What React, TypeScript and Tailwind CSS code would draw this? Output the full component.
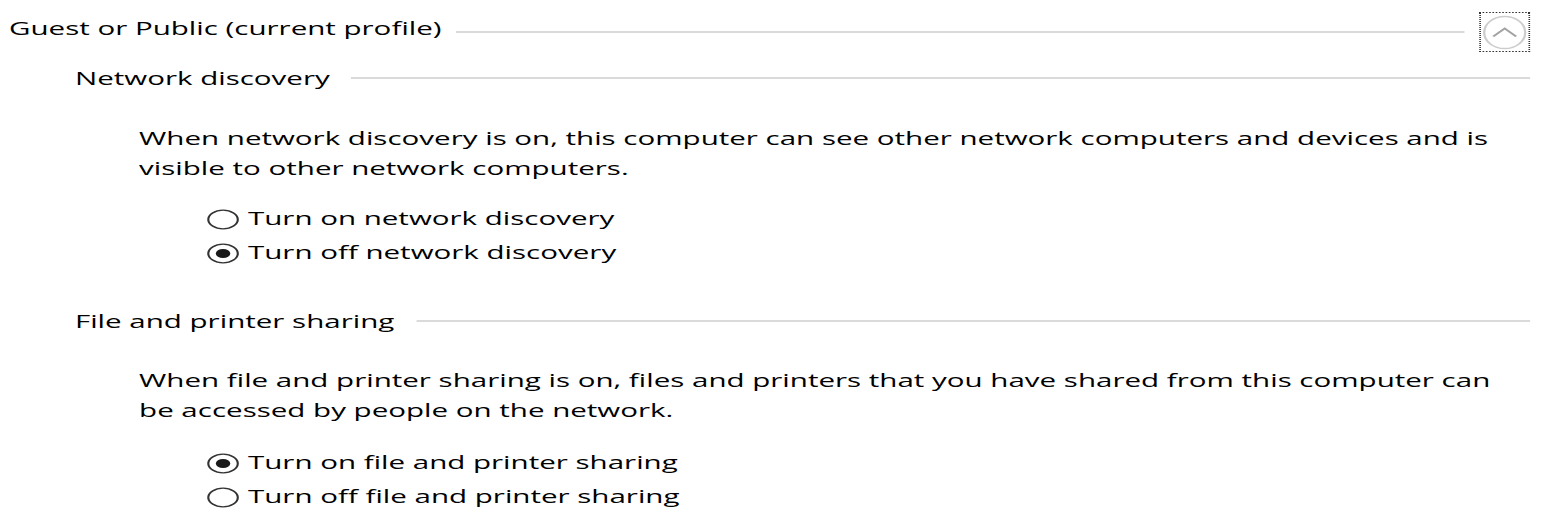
import React from "react";

function Radio({ checked }: { checked: boolean }) {
  return (
    <svg width="20" height="21" viewBox="0 0 20 21" className="mt-[5.5px] shrink-0">
      <ellipse cx="10" cy="10.5" rx="9" ry="9.3" fill="white" stroke="#333" strokeWidth="1.3" />
      {checked && <ellipse cx="10" cy="10.5" rx="4.4" ry="4.6" fill="#1a1a1a" />}
    </svg>
  );
}

function RadioRow({ checked, label }: { checked: boolean; label: string }) {
  return (
    <div className="flex h-[34px] items-start pl-[126.2px]">
      <Radio checked={checked} />
      <span className="ml-[5px] whitespace-nowrap leading-[30px]">{label}</span>
    </div>
  );
}

function SectionHeading({ label, mt }: { label: string; mt: string }) {
  return (
    <div className={`flex h-[30px] items-center pl-[45.7px] pr-[13.4px] ${mt}`}>
      <span className="whitespace-nowrap leading-[30px]">{label}</span>
      <div className="ml-[13.4px] h-[2px] flex-1 bg-[#dadada]" />
    </div>
  );
}

export default function App() {
  return (
    <div className="h-[529px] w-[1552px] overflow-hidden bg-white">
      <div
        className="w-[946.34px] origin-top-left scale-x-[1.64] text-[18px] font-medium text-black"
        style={{ fontFamily: '"Open Sans", "Noto Sans", sans-serif' }}
      >
        {/* Header */}
        <div className="flex h-[52px] items-start pl-[5.5px] pr-[13.4px]">
          <span className="mt-[13px] whitespace-nowrap leading-[30px]">Guest or Public (current profile)</span>
          <div className="ml-[9.1px] mt-[31px] h-[2px] flex-1 bg-[#dadada]" />
          <div className="ml-[9.1px] mt-[12px] flex h-[40px] w-[30.5px] items-center justify-center border border-dotted border-[#333]">
            <svg width="27" height="35" viewBox="0 0 27 35">
              <ellipse cx="13.5" cy="17.5" rx="12.5" ry="16" fill="white" stroke="#cdcdcd" strokeWidth="1.4" />
              <path d="M6.5 21.5 L13.5 13.5 L20.5 21.5" fill="none" stroke="#a3a3a3" strokeWidth="1.6" />
            </svg>
          </div>
        </div>

        <SectionHeading label="Network discovery" mt="mt-[11px]" />

        <div className="mt-[30px] pl-[84.8px] leading-[30px]">
          <div className="whitespace-nowrap">
            When network discovery is on, this computer can see other network computers and devices and is
          </div>
          <div className="whitespace-nowrap">visible to other network computers.</div>
        </div>

        <div className="mt-[20px]">
          <RadioRow checked={false} label="Turn on network discovery" />
          <RadioRow checked={true} label="Turn off network discovery" />
        </div>

        <SectionHeading label="File and printer sharing" mt="mt-[35px]" />

        <div className="mt-[29px] pl-[84.8px] leading-[30px]">
          <div className="whitespace-nowrap">
            When file and printer sharing is on, files and printers that you have shared from this computer can
          </div>
          <div className="whitespace-nowrap">be accessed by people on the network.</div>
        </div>

        <div className="mt-[22px]">
          <RadioRow checked={true} label="Turn on file and printer sharing" />
          <RadioRow checked={false} label="Turn off file and printer sharing" />
        </div>
      </div>
    </div>
  );
}
